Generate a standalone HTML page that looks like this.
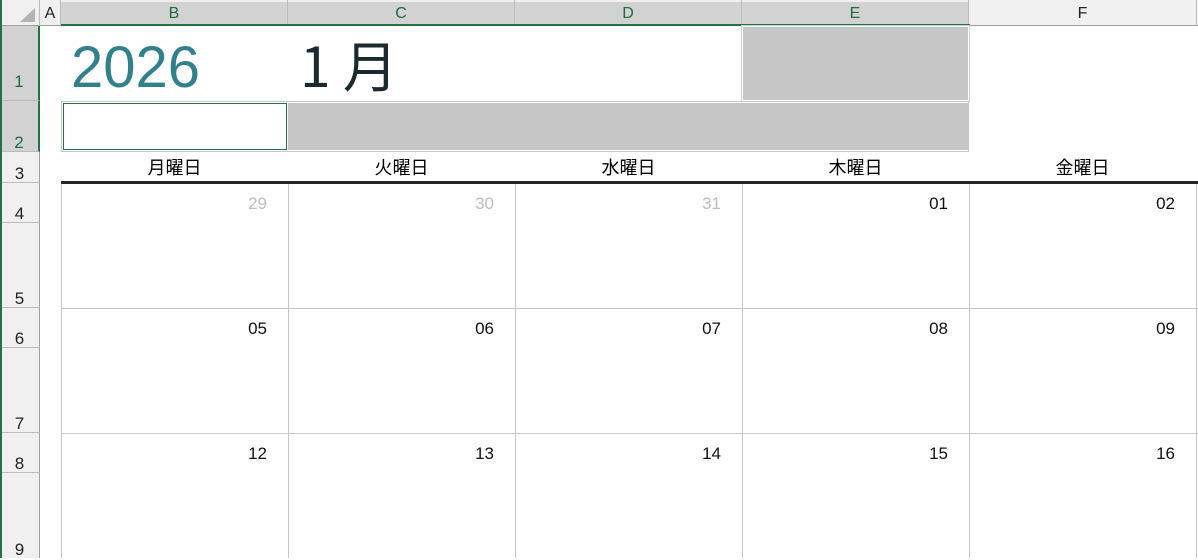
<!DOCTYPE html>
<html><head><meta charset="utf-8"><style>
body{margin:0;width:1198px;height:558px;overflow:hidden;background:#fff;font-family:"Liberation Sans","Noto Sans CJK JP",sans-serif;position:relative}
div{position:absolute;box-sizing:border-box}
.ch{top:0;height:26px;font-size:16px;text-align:center;line-height:28px;border-right:1px solid #bcbcbc}
.rh{left:0;width:40px;background:#f0f0f0;border-bottom:1px solid #bcbcbc;border-right:1px solid #9e9e9e;font-size:17px;text-align:center;color:#222}
.rh span{position:absolute;bottom:-2px;left:0;right:0}
.vl{width:1px;background:#c6c6c6}
.hl{height:1px;background:#c6c6c6}
.day{font-size:18px;text-align:center;top:155px;width:227px;color:#000;line-height:24px;font-family:"Noto Sans CJK JP",sans-serif}
.num{font-size:17px;width:210px;text-align:right;color:#111}
</style></head><body>
<div style="left:0;top:0;width:1198px;height:26px;background:#f0f0f0;border-bottom:1px solid #9e9e9e"></div>
<div style="left:0;top:0;width:40px;height:26px;border-right:1px solid #bcbcbc"></div>
<div style="left:20px;top:8px;width:0;height:0;border-left:15px solid transparent;border-bottom:14px solid #b4b4b4"></div>
<div class="ch" style="left:40px;width:21px;color:#222">A</div>
<div style="left:61px;top:2px;width:908px;height:24px;background:#d2d2d2"></div>
<div class="ch" style="left:61px;width:227px;color:#1e6b3e">B</div>
<div class="ch" style="left:288px;width:227px;color:#1e6b3e">C</div>
<div class="ch" style="left:515px;width:227px;color:#1e6b3e">D</div>
<div class="ch" style="left:742px;width:227px;color:#1e6b3e">E</div>
<div class="ch" style="left:969px;width:228px;color:#222">F</div>
<div style="left:61px;top:24px;width:909px;height:2px;background:#217346"></div>
<div class="rh" style="top:26px;height:75px;background:#d2d2d2;border-right:2px solid #217346"><span style="color:#1e6b3e;bottom:8px">1</span></div>
<div class="rh" style="top:101px;height:51px;background:#d2d2d2;border-right:2px solid #217346"><span style="color:#1e6b3e">2</span></div>
<div class="rh" style="top:152px;height:31px"><span>3</span></div>
<div class="rh" style="top:183px;height:40px"><span>4</span></div>
<div class="rh" style="top:223px;height:85px"><span>5</span></div>
<div class="rh" style="top:308px;height:40px"><span>6</span></div>
<div class="rh" style="top:348px;height:85px"><span>7</span></div>
<div class="rh" style="top:433px;height:40px"><span>8</span></div>
<div class="rh" style="top:473px;height:85px;border-bottom:none"><span>9</span></div>
<div style="left:0;top:0;width:2px;height:558px;background:#217346"></div>
<div style="left:71px;top:36px;font-size:58px;color:#31808c;line-height:64px">2026</div>
<div style="left:300px;top:28px;font-size:55px;color:#1a2a2e;line-height:70px;font-family:'Noto Sans CJK JP','Liberation Sans',sans-serif">1 月</div>
<div style="left:742px;top:26px;width:227px;height:75px;background:#c6c6c6;border:1px solid #fff;outline:1px solid #d0d0d0"></div>
<div style="left:61px;top:101px;width:908px;height:51px;border:1px solid #c6c6c6"></div>
<div style="left:63px;top:103px;width:224px;height:47px;border:1px solid #217346"></div>
<div style="left:288px;top:103px;width:680px;height:47px;background:#c6c6c6"></div>
<div class="day" style="left:61px">月曜日</div>
<div class="day" style="left:288px">火曜日</div>
<div class="day" style="left:515px">水曜日</div>
<div class="day" style="left:742px">木曜日</div>
<div class="day" style="left:969px">金曜日</div>
<div style="left:61px;top:181px;width:1137px;height:3px;background:#262626"></div>
<div class="vl" style="left:288px;top:184px;height:374px"></div>
<div class="vl" style="left:515px;top:184px;height:374px"></div>
<div class="vl" style="left:742px;top:184px;height:374px"></div>
<div class="vl" style="left:969px;top:184px;height:374px"></div>
<div class="vl" style="left:1196px;top:184px;height:374px"></div>
<div class="vl" style="left:61px;top:184px;height:374px"></div>
<div class="hl" style="left:61px;top:308px;width:1137px"></div>
<div class="hl" style="left:61px;top:433px;width:1137px"></div>
<div class="num" style="left:57px;top:194px;color:#bdbdbd">29</div>
<div class="num" style="left:284px;top:194px;color:#bdbdbd">30</div>
<div class="num" style="left:511px;top:194px;color:#bdbdbd">31</div>
<div class="num" style="left:738px;top:194px">01</div>
<div class="num" style="left:965px;top:194px">02</div>
<div class="num" style="left:57px;top:319px">05</div>
<div class="num" style="left:284px;top:319px">06</div>
<div class="num" style="left:511px;top:319px">07</div>
<div class="num" style="left:738px;top:319px">08</div>
<div class="num" style="left:965px;top:319px">09</div>
<div class="num" style="left:57px;top:444px">12</div>
<div class="num" style="left:284px;top:444px">13</div>
<div class="num" style="left:511px;top:444px">14</div>
<div class="num" style="left:738px;top:444px">15</div>
<div class="num" style="left:965px;top:444px">16</div>
</body></html>
